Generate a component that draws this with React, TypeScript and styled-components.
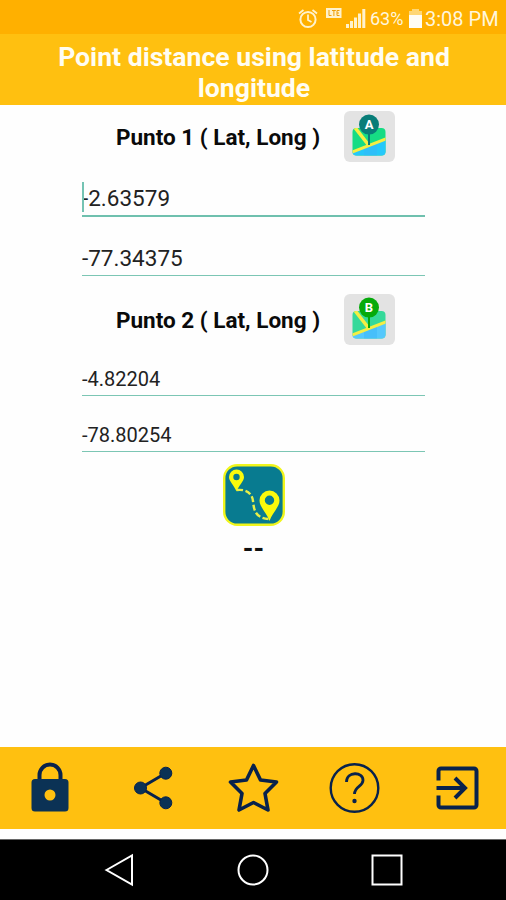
import React from "react";
import styled, { createGlobalStyle } from "styled-components";

const GlobalStyle = createGlobalStyle`
  * { box-sizing: border-box; }
  body { margin: 0; background: #fff; font-family: Roboto, "Liberation Sans", sans-serif; }
`;

const Screen = styled.div`
  width: 506px;
  height: 900px;
  display: flex;
  flex-direction: column;
  background: #fefefe;
  overflow: hidden;
`;

const StatusBar = styled.div`
  height: 34px;
  flex: none;
  display: flex;
  align-items: center;
  justify-content: flex-end;
  padding: 3px 7px 0 0;
  background: #ffb000;
  color: #fff6dc;
  white-space: nowrap;
`;

const StatusIcons = styled.svg`
  display: block;
  width: 72px;
  height: 30px;
  margin-right: 2px;
`;

const Percent = styled.span`
  width: 35px;
  font-size: 18px;
`;

const Battery = styled.svg`
  display: block;
  width: 15px;
  height: 30px;
  margin: 0 2px 0 3px;
`;

const Clock = styled.span`
  width: 74px;
  font-size: 20px;
`;

const Header = styled.h1`
  margin: 0;
  height: 70.5px;
  flex: none;
  padding: 7px 50px 0 52px;
  background: #ffc010;
  color: #fffdf2;
  font-size: 26.6px;
  line-height: 31px;
  font-weight: 700;
  text-align: center;
`;

const Form = styled.main`
  flex: 1;
  display: flex;
  flex-direction: column;
  padding: 6.5px 81px 0 82px;
`;

const PointRow = styled.div<{ $gap?: number }>`
  height: 51px;
  margin-top: ${(p) => p.$gap ?? 0}px;
  display: flex;
  align-items: center;
  justify-content: space-between;
  padding: 0 30.5px 0 34px;
`;

const PointLabel = styled.h2`
  margin: 1px 0 0;
  color: #0a0a0a;
  font-size: 22.5px;
  line-height: 28px;
  font-weight: 700;
  white-space: nowrap;
`;

const MapButton = styled.button`
  width: 51px;
  height: 51px;
  padding: 0;
  border: 0;
  border-radius: 6px;
  background: #e3e3e3;
  svg { display: block; }
`;

const Field = styled.div<{ $h: number; $size: number; $pad: number; $active?: boolean }>`
  height: ${(p) => p.$h}px;
  display: flex;
  align-items: flex-end;
  padding-bottom: ${(p) => p.$pad}px;
  border-bottom: ${(p) => (p.$active ? "2px solid #6fc0ae" : "1px solid #7cc6b4")};
  color: #222;
  font-size: ${(p) => p.$size}px;
  line-height: 28px;
  position: relative;
`;

const Caret = styled.i`
  position: absolute;
  left: 0;
  bottom: 3px;
  width: 2px;
  height: 30px;
  background: #74c3b3;
`;

const RouteButton = styled.button`
  align-self: center;
  width: 62px;
  height: 62px;
  margin: 12px 0 0 0;
  padding: 0;
  border: 0;
  background: none;
  svg { display: block; }
`;

const Result = styled.output`
  align-self: center;
  display: block;
  margin-top: 8px;
  font-size: 27px;
  line-height: 30px;
  font-weight: 700;
  color: #111;
`;

const Toolbar = styled.nav`
  height: 82.5px;
  flex: none;
  display: flex;
  align-items: center;
  justify-content: space-between;
  padding: 0 24px;
  margin-bottom: 10px;
  background: #ffc010;
`;

const ToolIcon = styled.svg`
  display: block;
  width: 52px;
  height: 52px;
  overflow: visible;
  fill: none;
  stroke: #08224c;
`;

const SystemNav = styled.footer`
  height: 61px;
  flex: none;
  display: flex;
  align-items: center;
  justify-content: center;
  gap: 102px;
  border-top: 1px solid #666;
  background: #000;
`;

const NavIcon = styled.svg`
  display: block;
  width: 32px;
  height: 32px;
  overflow: visible;
  fill: none;
  stroke: #fff;
  stroke-width: 2;
`;

const PinLetter = styled.text`
  font: 700 13px Roboto, sans-serif;
  fill: #fff;
  text-anchor: middle;
`;

function MapIcon({ letter, color, land, water }: { letter: string; color: string; land: string; water: string }) {
  return (
    <svg width="51" height="51" viewBox="0 0 51 51">
      <clipPath id={"map" + letter}>
        <rect x="8.5" y="17" width="33" height="27.5" rx="4" />
      </clipPath>
      <g clipPath={`url(#map${letter})`}>
        <rect x="8" y="16" width="35" height="30" fill={land} />
        <path d="M8 41 43 28V46H8Z" fill={water} />
        <path d="M20 37 33 31V46H20Z" fill="#38b4f8" opacity=".45" />
        <path d="M8 41 43 27.5" stroke="#f5ee42" strokeWidth="3" />
        <path d="M9 14 24.5 34" stroke="#f5ee42" strokeWidth="3.5" />
      </g>
      <path d="M25 22V34" stroke={color} strokeWidth="2" />
      <circle cx="25" cy="13.6" r="10" fill={color} />
      <PinLetter x="25" y="18.2">{letter}</PinLetter>
    </svg>
  );
}

function RouteIcon() {
  return (
    <svg width="62" height="62" viewBox="0 0 62 62">
      <rect x="1.2" y="1.2" width="59.6" height="59.6" rx="13" fill="#087b90" stroke="#f0f51c" strokeWidth="2.4" />
      <g fill="#fafa0c" fillRule="evenodd">
        <path d="M13.5 27.5C11 21 6 17.5 6 13a7.5 7.5 0 0 1 15 0c0 4.5-5 8-7.5 14.5ZM13.5 9.8a3.2 3.2 0 1 0 0 6.4a3.2 3.2 0 0 0 0-6.4Z" />
        <path d="M46.5 57C43.5 48.5 36.5 43 36.5 36.5a10 10 0 0 1 20 0c0 6.5-7 12-10 20.5ZM46.5 31.5a4.7 4.7 0 1 0 0 9.4a4.7 4.7 0 0 0 0-9.4Z" />
      </g>
      <path d="M14 26C23 25 29 29 30 37C31 46 32 54 46 55" fill="none" stroke="#e8ef48" strokeWidth="2.4" strokeDasharray="6 2.5" />
    </svg>
  );
}

export default function App() {
  return (
    <>
      <GlobalStyle />
      <Screen>
        <StatusBar>
          <StatusIcons viewBox="0 0 72 30" fill="none" stroke="#fff2cc">
            <circle cx="12" cy="15.5" r="7.6" strokeWidth="2" />
            <path d="M12 10.5V16l3.5 2M3 9.5 7.5 6M21 9.5 16.5 6" strokeWidth="1.8" />
            <rect x="30" y="4" width="15.5" height="10" fill="#fff2cc" stroke="none" />
            <path d="M33 6V11.5H35.5M36 6.5H39.8M37.9 6.5V12M43.5 6.5H41V11.5H43.5M41 9H43" stroke="#ef9e08" strokeWidth="1" />
            <path d="M51.5 24V20M55.5 24V17M59.5 24V13.5M63.5 24V9.5M67.8 24V5" strokeWidth="3" />
          </StatusIcons>
          <Percent>63%</Percent>
          <Battery viewBox="0 0 15 30">
            <path d="M4 5H11V7H14V11H1V7H4Z" fill="#ffd775" />
            <path d="M1 11H14V24H1Z" fill="#fffdf5" />
          </Battery>
          <Clock>3:08 PM</Clock>
        </StatusBar>
        <Header>Point distance using latitude and longitude</Header>
        <Form>
          <PointRow>
            <PointLabel>Punto 1 ( Lat, Long )</PointLabel>
            <MapButton aria-label="Pick point A"><MapIcon letter="A" color="#087d78" land="#16dc84" water="#25c8fa" /></MapButton>
          </PointRow>
          <Field $h={55} $size={22.5} $pad={3} $active><Caret />-2.63579</Field>
          <Field $h={59} $size={22.5} $pad={3}>-77.34375</Field>
          <PointRow $gap={18}>
            <PointLabel>Punto 2 ( Lat, Long )</PointLabel>
            <MapButton aria-label="Pick point B"><MapIcon letter="B" color="#05aa0b" land="#35d99a" water="#55c8fc" /></MapButton>
          </PointRow>
          <Field $h={51} $size={20} $pad={2}>-4.82204</Field>
          <Field $h={56} $size={20} $pad={2}>-78.80254</Field>
          <RouteButton aria-label="Calculate distance"><RouteIcon /></RouteButton>
          <Result>--</Result>
        </Form>
        <Toolbar>
          <ToolIcon viewBox="0 0 52 52">
            <path d="M15.5 18V13a10.5 10.5 0 0 1 21 0V18" strokeWidth="4" />
            <path fillRule="evenodd" d="M11 17H41a3.5 3.5 0 0 1 3.5 3.5V46a3.5 3.5 0 0 1-3.5 3.5H11A3.5 3.5 0 0 1 7.5 46V20.5A3.5 3.5 0 0 1 11 17ZM26 27.5a5.5 5.5 0 1 0 0 11a5.5 5.5 0 0 0 0-11Z" fill="#0b3255" stroke="none" />
          </ToolIcon>
          <ToolIcon viewBox="0 0 52 52">
            <path d="M40 11 14.5 26 40 41" strokeWidth="3" />
            <g fill="#0b3255" strokeWidth="1"><circle cx="14.5" cy="26" r="6" /><circle cx="39.8" cy="11.2" r="6" /><circle cx="39.8" cy="40.8" r="6" /></g>
          </ToolIcon>
          <ToolIcon viewBox="0 0 52 52">
            <path d="M26.5 3.5 33.5 18 49.5 20 38 31.5 41 48 26.5 40.5 12 48 15 31.5 3.5 20 19.5 18Z" strokeWidth="3.6" strokeLinejoin="round" />
          </ToolIcon>
          <ToolIcon viewBox="0 0 52 52">
            <circle cx="25.5" cy="26" r="23.8" strokeWidth="2.4" />
            <path d="M17.5 20c0-11 17-10.5 16.5-1.5c-.3 6-8.5 6-8.5 13.5" strokeWidth="2.8" />
            <circle cx="25.5" cy="39" r="2.2" fill="#08224c" stroke="none" />
          </ToolIcon>
          <ToolIcon viewBox="0 0 52 52">
            <path d="M8.5 18.5V9a2.5 2.5 0 0 1 2.5-2.5H44A2.5 2.5 0 0 1 46.5 9V43a2.5 2.5 0 0 1-2.5 2.5H11A2.5 2.5 0 0 1 8.5 43V33.5M6.5 26H35M25 16 35 26 25 36" strokeWidth="4" />
          </ToolIcon>
        </Toolbar>
        <SystemNav>
          <NavIcon viewBox="0 0 32 32"><path d="M3.5 16 29 1.5V30.5Z" /></NavIcon>
          <NavIcon viewBox="0 0 32 32"><circle cx="16" cy="16" r="14.5" /></NavIcon>
          <NavIcon viewBox="0 0 32 32"><rect x="1.5" y="1.5" width="29" height="29" /></NavIcon>
        </SystemNav>
      </Screen>
    </>
  );
}
